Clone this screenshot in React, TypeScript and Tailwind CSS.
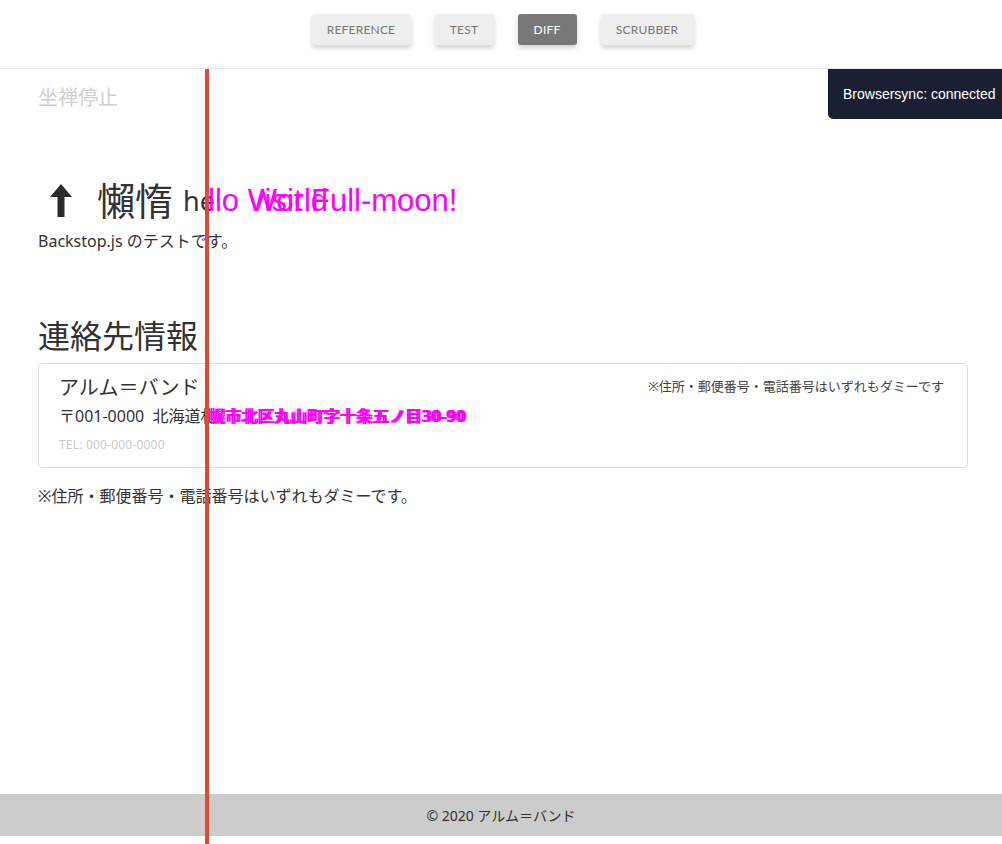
import React from "react";

const jp = { fontFamily: '"Noto Sans", "Noto Sans CJK JP", sans-serif' } as React.CSSProperties;

function Btn({ label, active }: { label: string; active?: boolean }) {
  return (
    <div
      className={
        "h-[31px] px-4 flex items-center justify-center rounded-[3px] text-[12px] tracking-[0.2px] shadow-[0_3px_5px_rgba(0,0,0,0.18)] " +
        (active ? "bg-[#787878] text-white" : "bg-[#eeeeee] text-[#777]")
      }
      style={{ fontFamily: 'Lato, "Liberation Sans", sans-serif' }}
    >
      {label}
    </div>
  );
}

export default function App() {
  return (
    <div className="relative w-[1002px] h-[844px] bg-white flex flex-col overflow-hidden" style={jp}>
      <header className="h-[69px] shrink-0 border-b border-[#e6e6e6] flex items-start justify-center pt-[14px]">
        <div className="flex gap-[24px] ml-[3px]">
          <div className="w-[99px]"><Btn label="REFERENCE" /></div>
          <div className="w-[59px]"><Btn label="TEST" /></div>
          <div className="w-[59px]"><Btn label="DIFF" active /></div>
          <div className="w-[93px]"><Btn label="SCRUBBER" /></div>
        </div>
      </header>

      <main className="flex-1 flex flex-col pl-[38px] pr-[34px] text-[#333]">
        <div className="pt-[14px] text-[20px] leading-[30px] text-[#cfcfcf]">坐禅停止</div>

        <h1 className="relative mt-[63px] h-[48px] flex items-center text-[38px] leading-[48px] font-normal">
          <svg width="22" height="33" viewBox="0 0 22 33" className="ml-[12px] mr-[25px] shrink-0">
            <path d="M11 0 L22 13 L14.5 13 L14.5 33 L7.5 33 L7.5 13 L0 13 Z" fill="#2b2b2b" />
          </svg>
          <span className="shrink-0">懶惰</span>
          <span
            className="ml-[10px] whitespace-nowrap text-[27px] text-[#333] pt-[2px]"
            style={{ fontFamily: '"Noto Sans", sans-serif' }}
          >
            he
          </span>
          <span
            className="absolute left-[170px] top-0 h-[48px] text-[31px] leading-[48px] text-[#ff00ff]"
            style={{ fontFamily: '"Liberation Sans", Arial, sans-serif' }}
          >
            <span className="absolute left-[0px] top-[1px] whitespace-nowrap">llo World</span>
            <span className="absolute left-[41px] top-[1px] whitespace-nowrap">visit Full-moon!</span>
          </span>
        </h1>

        <p className="mt-[5px] text-[16px] leading-[24px]">Backstop.js のテストです。</p>

        <h2 className="mt-[63px] text-[32px] leading-[40px] font-normal">連絡先情報</h2>

        <div className="mt-[7px] border border-[#dddddd] rounded-[4px] pl-[20px] pr-[21px] pt-[10px] pb-[13px]">
          <div className="flex justify-between items-center">
            <div className="text-[20px] leading-[28px]">アルム＝バンド</div>
            <div className="text-[13px] leading-[18px] text-[#444] -mt-[4px] mr-[2px]">※住所・郵便番号・電話番号はいずれもダミーです</div>
          </div>
          <div className="relative mt-[2px] h-[24px] text-[16px] leading-[24px]">
            <div className="whitespace-pre">〒001-0000  北海道札</div>
            <div className="absolute left-[149px] top-0 h-[24px] text-[#ff00ff] font-bold">
              <span className="absolute left-0 top-0 whitespace-nowrap tracking-[0.4px]">幌市北区丸山町字十条五ノ目30-90</span>
              <span className="absolute left-[2px] top-0 whitespace-nowrap tracking-[0.4px]">幌市北区丸山町字十条五ノ目30-90</span>
            </div>
          </div>
          <div className="mt-[8px] text-[12px] leading-[18px] text-[#c8c8c8] tracking-[0.2px]">TEL: 000-000-0000</div>
        </div>

        <p className="mt-[16px] text-[16px] leading-[24px]">※住所・郵便番号・電話番号はいずれもダミーです。</p>
      </main>

      <footer className="h-[42px] shrink-0 bg-[#cccccc] flex items-center justify-center text-[14px] text-[#333]">
        © 2020 アルム＝バンド
      </footer>
      <div className="h-[8px] shrink-0 bg-white" />

      <div
        className="absolute right-0 top-[69px] w-[174px] h-[50px] bg-[#1b1f33] rounded-bl-[5px] text-white text-[14px] flex items-center pl-[15px]"
        style={{ fontFamily: '"Liberation Sans", Arial, sans-serif' }}
      >
        Browsersync: connected
      </div>

      <div className="absolute left-[205px] top-[69px] bottom-0 w-[4px] bg-[#e5473a]" />
    </div>
  );
}
